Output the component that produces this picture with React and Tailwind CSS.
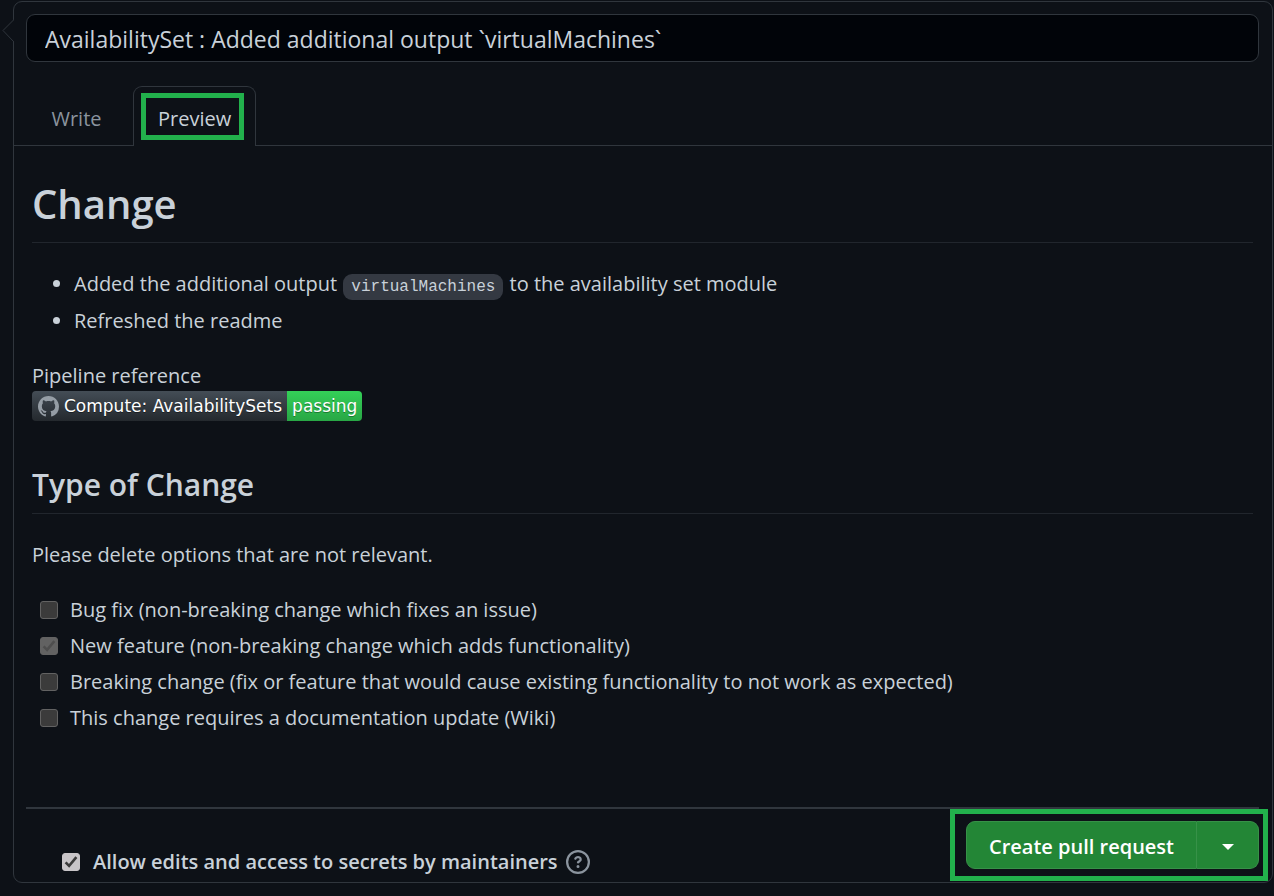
import { useState } from "react";

const OPTIONS = [
  { id: "bug", label: "Bug fix (non-breaking change which fixes an issue)", checked: false },
  { id: "feature", label: "New feature (non-breaking change which adds functionality)", checked: true },
  { id: "breaking", label: "Breaking change (fix or feature that would cause existing functionality to not work as expected)", checked: false },
  { id: "docs", label: "This change requires a documentation update (Wiki)", checked: false },
];

function GitHubMark() {
  return (
    <svg viewBox="0 0 16 16" className="h-[21px] w-[21px] fill-[#959da5]" aria-hidden="true">
      <path d="M8 0C3.58 0 0 3.58 0 8c0 3.54 2.29 6.53 5.47 7.59.4.07.55-.17.55-.38 0-.19-.01-.82-.01-1.49-2.01.37-2.53-.49-2.69-.94-.09-.23-.48-.94-.82-1.13-.28-.15-.68-.52-.01-.53.63-.01 1.08.58 1.23.82.72 1.21 1.87.87 2.33.66.07-.52.28-.87.51-1.07-1.78-.2-3.64-.89-3.64-3.95 0-.87.31-1.59.82-2.15-.08-.2-.36-1.02.08-2.12 0 0 .67-.21 2.2.82.64-.18 1.32-.27 2-.27.68 0 1.36.09 2 .27 1.53-1.04 2.2-.82 2.2-.82.44 1.1.16 1.92.08 2.12.51.56.82 1.27.82 2.15 0 3.07-1.87 3.75-3.65 3.95.29.25.54.73.54 1.48 0 1.07-.01 1.93-.01 2.2 0 .21.15.46.55.38A8.013 8.013 0 0016 8c0-4.42-3.58-8-8-8z" />
    </svg>
  );
}

function QuestionIcon() {
  return (
    <svg viewBox="0 0 16 16" className="h-6 w-6 fill-[#8b949e]" aria-hidden="true">
      <path
        fillRule="evenodd"
        d="M8 1.5a6.5 6.5 0 100 13 6.5 6.5 0 000-13zM0 8a8 8 0 1116 0A8 8 0 010 8zm9 3a1 1 0 11-2 0 1 1 0 012 0zM6.92 6.085c.081-.16.19-.299.34-.398.145-.097.371-.187.74-.187.28 0 .553.087.738.225A.613.613 0 019 6.25c0 .177-.04.264-.077.318a.956.956 0 01-.277.245c-.076.051-.158.1-.258.161l-.007.004a7.728 7.728 0 00-.313.195 2.416 2.416 0 00-.692.661.75.75 0 001.248.832.956.956 0 01.276-.245 6.3 6.3 0 01.26-.16l.006-.004c.093-.057.204-.123.313-.195.222-.149.487-.355.692-.662.214-.32.329-.702.329-1.15 0-.76-.36-1.348-.863-1.725A2.76 2.76 0 008 4c-.631 0-1.155.16-1.572.438-.413.276-.68.638-.849.977a.75.75 0 101.342.67z"
      />
    </svg>
  );
}

function Checkbox({ id, checked, disabled, onChange }) {
  const tone = disabled
    ? "border-[#626262] bg-[#3b3b3b] checked:bg-[#626262]"
    : "border-[#c8c5c8] bg-[#3b3b3b] checked:bg-[#c8c5c8]";
  return (
    <span className="grid h-[18px] w-[18px] shrink-0">
      <input
        id={id}
        type="checkbox"
        checked={checked}
        disabled={disabled}
        onChange={onChange || (() => {})}
        className={`col-start-1 row-start-1 h-[18px] w-[18px] appearance-none rounded-[3px] border ${tone}`}
      />
      {checked && (
        <svg viewBox="0 0 18 18" className="pointer-events-none col-start-1 row-start-1 h-[18px] w-[18px]" aria-hidden="true">
          <path
            d="M3.6 9.4l3.5 3.5 7.3-8.7"
            fill="none"
            strokeWidth="2.6"
            className={disabled ? "stroke-[#4e4e4e]" : "stroke-[#3b3b3b]"}
          />
        </svg>
      )}
    </span>
  );
}

export default function App() {
  const [title, setTitle] = useState("AvailabilitySet : Added additional output `virtualMachines`");
  const [allowEdits, setAllowEdits] = useState(true);

  return (
    <div className="min-h-screen bg-[#0d1117] pt-px pr-px pb-[13px] pl-[13px] font-['Open_Sans','Noto_Sans',sans-serif] text-[20px] leading-8 text-[#c9d1d9]">
      <main className="relative rounded-[9px] border border-[#30363d]">
        <svg viewBox="0 0 12 24" className="absolute top-[17px] -left-[12px] h-6 w-3" aria-hidden="true">
          <path d="M12 0.5L1 11.5L12 23" fill="#0d1117" stroke="#30363d" />
        </svg>

        <div className="py-3 pr-[13px] pl-3">
          <input
            type="text"
            aria-label="Title"
            value={title}
            onChange={(e) => setTitle(e.target.value)}
            className="block h-12 w-full rounded-[9px] border border-[#30363d] bg-[#010409] px-[18px] pt-[2px] text-[23px] text-[#c9d1d9]"
          />
        </div>

        <div role="tablist" className="mt-3 flex h-[60px] items-end border-b border-[#30363d]">
          <button type="button" role="tab" aria-selected="false" className="h-[60px] w-[119px] pt-2 pl-[6px] text-[#8b949e]">
            Write
          </button>
          <button
            type="button"
            role="tab"
            aria-selected="true"
            className="-mb-px flex h-[60px] rounded-t-[9px] border border-b-0 border-[#30363d] bg-[#0d1117] py-[6px] pr-[11px] pl-[7px]"
          >
            <span className="flex h-[47px] items-center border-5 border-[#22b14c] pt-1 pr-2 pl-3">Preview</span>
          </button>
        </div>

        <article className="pt-[34px] pr-[19px] pl-[18px]">
          <h1 className="border-b border-[#21262d] pb-[14px] text-[40px] leading-[48px] font-semibold">Change</h1>

          <ul className="mt-[25px] flex list-disc flex-col gap-[5px] pl-[42px]">
            <li>
              Added the additional output{" "}
              <code className="mx-px rounded-[9px] bg-[#343942] px-2 py-1 font-['Liberation_Mono',monospace] text-[16px] leading-none">
                virtualMachines
              </code>{" "}
              to the availability set module
            </li>
            <li>Refreshed the readme</li>
          </ul>

          <p className="mt-[23px] leading-[31px]">Pipeline reference</p>
          <a
            href="#pipeline"
            className="flex h-[30px] w-fit overflow-hidden rounded-[4px] font-['DejaVu_Sans',Verdana,sans-serif] text-[17px] leading-[30px] text-white"
          >
            <span className="flex items-center gap-[5px] bg-linear-to-b from-[#444d56] to-[#24292e] pr-[5px] pl-[6px] [text-shadow:0_1px_0_#1b1f23]">
              <GitHubMark />
              Compute: AvailabilitySets
            </span>
            <span className="bg-linear-to-b from-[#34d058] to-[#28a745] px-[5px] [text-shadow:0_1px_0_#1b7a30]">passing</span>
          </a>

          <h2 className="mt-11 border-b border-[#21262d] pb-2 text-[30px] leading-10 font-semibold">Type of Change</h2>

          <p className="mt-[25px]">Please delete options that are not relevant.</p>

          <ul className="mt-[21px] flex flex-col">
            {OPTIONS.map((option) => (
              <li key={option.id} className="flex h-9 items-center gap-3 pl-2">
                <Checkbox id={option.id} checked={option.checked} disabled />
                <label htmlFor={option.id}>{option.label}</label>
              </li>
            ))}
          </ul>
        </article>

        <hr className="mt-[71px] mr-[13px] ml-3 border-t-2 border-[#30363d]" />

        <footer className="flex items-end justify-between pr-1 pl-12">
          <div className="flex items-center pb-1">
            <Checkbox id="allow-edits" checked={allowEdits} onChange={(e) => setAllowEdits(e.target.checked)} />
            <label htmlFor="allow-edits" className="pr-2 pl-[13px] font-semibold">
              Allow edits and access to secrets by maintainers
            </label>
            <button type="button" aria-label="Help">
              <QuestionIcon />
            </button>
          </div>
          <div className="mb-px flex border-5 border-[#22b14c] py-[7px] pr-1 pl-[11px]">
            <button
              type="button"
              className="h-12 w-[231px] rounded-l-[9px] border border-[#379148] bg-[#238636] pt-[3px] font-semibold text-white"
            >
              Create pull request
            </button>
            <button
              type="button"
              aria-label="Select pull request type"
              className="flex h-12 w-[62px] items-center justify-center rounded-r-[9px] border border-l-0 border-[#379148] bg-[#238636]"
            >
              <svg viewBox="0 0 12 6" className="mt-1 h-[6px] w-3 fill-white" aria-hidden="true">
                <path d="M0 0h12L6 6z" />
              </svg>
            </button>
          </div>
        </footer>
      </main>
    </div>
  );
}
